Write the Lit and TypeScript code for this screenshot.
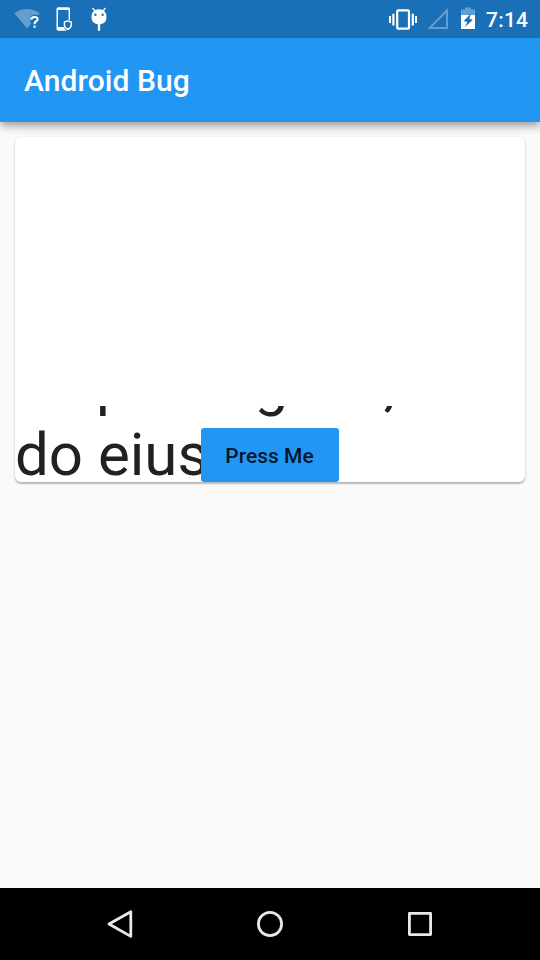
import { LitElement, html, css } from "lit";
import { customElement } from "lit/decorators.js";

@customElement("status-bar")
class StatusBar extends LitElement {
  static styles = css`
    :host { display: flex; height: 38px; background: #1a70b7; color: #fff; position: relative; z-index: 2; }
    svg { display: block; width: 540px; height: 38px; flex: none; }
    .time { font: 500 21px/21px Roboto, sans-serif; fill: #fff; }
  `;
  render() {
    return html`
      <svg viewBox="0 0 540 38" fill="#fff">
        <path opacity=".32" d="M27 28.5 14.4 13.2Q27 5 39.6 13.2L38.8 15.3Q34 13.2 30.3 17V21.5L31.3 23.4Z" />
        <path fill="none" stroke="#fff" stroke-width="2" d="M31.3 19.6Q31.5 17 34.5 17C38.7 17 38.2 20.6 35.6 21.6Q34.5 22.3 34.5 24.2" />
        <rect x="33.5" y="25.6" width="2.1" height="2.2" />
        <path fill-rule="evenodd" d="M58.2 7.2H68.2Q70 7.2 70 9V20.3L68.6 19.5V10H58V27H63.7Q64.6 29.5 66.6 30.7H58.2Q56.5 30.7 56.5 29V9Q56.5 7.2 58.2 7.2Z" />
        <path fill="none" stroke="#fff" stroke-width="1.4" d="M67.8 20.8 71.2 22V25.1Q71.2 28 67.8 29.5 64.4 28 64.4 25.1V22Z" />
        <path fill-rule="evenodd" d="M94.2 10.8Q99 7.9 103.8 10.8 106.6 13 106.5 17 106.5 23.7 100.2 24.3V30.8H97.8V24.3Q91.5 23.7 91.5 17 91.4 13 94.2 10.8ZM94.2 14.7A1.2 1.2 0 1 0 96.6 14.7 1.2 1.2 0 1 0 94.2 14.7ZM101.4 14.7A1.2 1.2 0 1 0 103.8 14.7 1.2 1.2 0 1 0 101.4 14.7Z" />
        <path fill="none" stroke="#fff" stroke-width="1.3" d="M92.6 8 95 11M105.4 8 103 11" />
        <rect x="397.2" y="10.3" width="11.8" height="18.4" rx="1" fill="none" stroke="#fff" stroke-width="2.2" />
        <path d="M389 16h2v7h-2zM392.3 13.8h2.2v11.6h-2.2zM411.7 13.8h2.2v11.6h-2.2zM415 16h2v7h-2z" />
        <path opacity=".32" fill-rule="evenodd" d="M448 8V29H427.3ZM446 13 432 27H446Z" />
        <path opacity=".32" d="M461 15V9.5H465V7.5H471V9.5H475V15H470.4L470.7 13.5 469 15Z" />
        <path fill-rule="evenodd" d="M461 15H469.4L463.8 21 467.3 22 465 27 472.8 19.7 469.3 18.7 470.5 15H475V29H461Z" />
        <text class="time" x="486" y="27" textLength="42">7:14</text>
      </svg>
    `;
  }
}

@customElement("nav-bar")
class NavBar extends LitElement {
  static styles = css`
    :host { display: flex; height: 72px; background: #000; justify-content: center; align-items: center; gap: 114px; }
    svg { width: 36px; height: 36px; fill: none; stroke: #e8e8e8; stroke-width: 2.8; stroke-linejoin: round; }
  `;
  render() {
    return html`
      <svg viewBox="0 0 36 36"><path d="M28.8 5.8V30.4L7 18Z" /></svg>
      <svg viewBox="0 0 36 36"><circle cx="18" cy="18" r="11.6" /></svg>
      <svg viewBox="0 0 36 36"><rect x="7.4" y="7.4" width="21.2" height="21.2" /></svg>
    `;
  }
}

@customElement("app-root")
class AppRoot extends LitElement {
  static styles = css`
    :host {
      display: flex; flex-direction: column; width: 540px; height: 960px;
      overflow: hidden; background: #fafafa; font-family: Roboto, sans-serif;
    }
    .bar {
      height: 84px; flex: none; box-sizing: border-box; padding: 2px 24px 0;
      display: flex; align-items: center; position: relative; z-index: 1;
      background: #2196f3; color: #fff;
      box-shadow: 0 3px 6px -1.5px rgba(0,0,0,.2), 0 6px 7.5px rgba(0,0,0,.14), 0 1.5px 15px rgba(0,0,0,.12);
    }
    .title { font-size: 30px; font-weight: 500; line-height: 36px; letter-spacing: .06px; margin: 0; }
    .body { flex: 1; padding: 15px; }
    .card {
      height: 345px; position: relative; display: flex; flex-direction: column; justify-content: flex-end;
      background: #fff; border-radius: 6px;
      box-shadow: 0 1.5px 1.5px rgba(0,0,0,.2), 0 1px 3px rgba(0,0,0,.14);
    }
    .clip { height: 76px; overflow: hidden; border-radius: 0 0 6px 6px; }
    .text { margin: -58px 0 0; font-size: 60px; line-height: 71px; color: #212121; white-space: nowrap; }
    .line { display: block; }
    .press {
      position: absolute; bottom: 0; left: 186px; width: 138px; height: 54px; box-sizing: border-box;
      border: 0; border-radius: 3px; padding: 2px 1px 0 0; background: #2196f3; color: rgba(0,0,0,.87);
      font: 500 21px/24px Roboto, sans-serif;
    }
  `;
  render() {
    return html`
      <status-bar></status-bar>
      <header class="bar"><h1 class="title">Android Bug</h1></header>
      <main class="body">
        <section class="card">
          <div class="clip">
            <p class="text"><span class="line">adipiscing elit, sed</span><span class="line">do eius</span></p>
          </div>
          <button class="press">Press Me</button>
        </section>
      </main>
      <nav-bar></nav-bar>
    `;
  }
}
